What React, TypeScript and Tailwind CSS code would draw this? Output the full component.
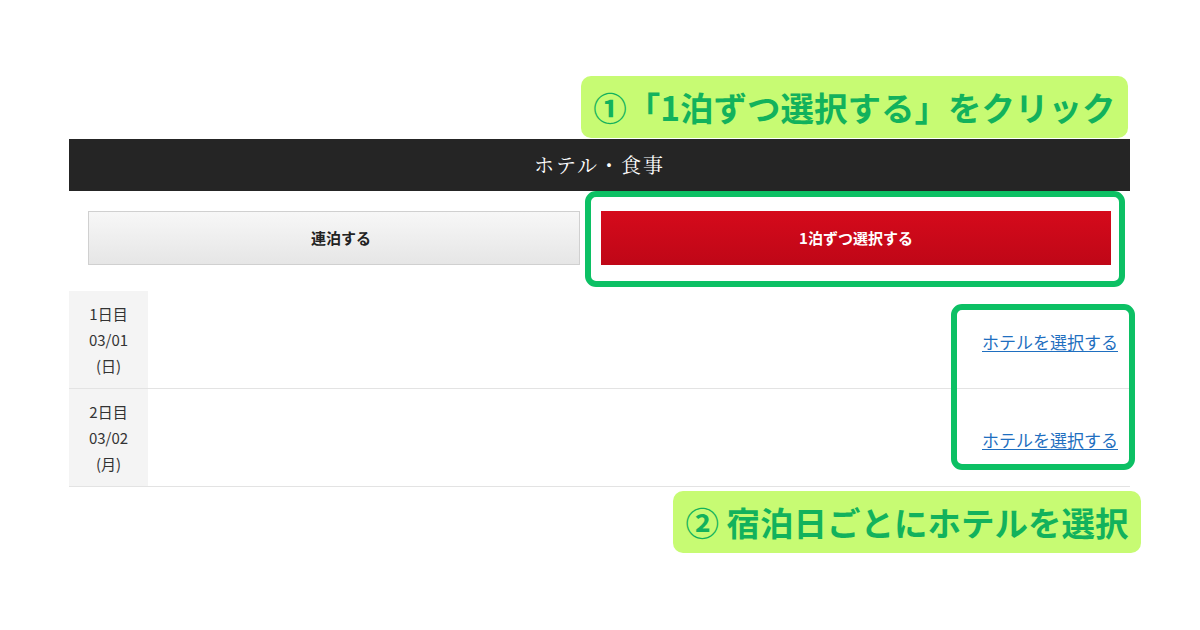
import React from "react";

const jp = { fontFamily: '"Noto Sans CJK JP", "Noto Sans", sans-serif' };

function Row({ day, date, dow }: { day: string; date: string; dow: string }) {
  return (
    <div className="flex h-[98px] border-b border-[#e3e3e3]">
      <div className="flex w-[79px] flex-col items-center justify-center bg-[#f4f4f4] text-[15px] leading-[26px] text-[#333]">
        <span>{day}</span>
        <span>{date}</span>
        <span>{dow}</span>
      </div>
      <div className="flex flex-1 items-center justify-end pr-[12px] pt-[4px]">
        <a className="text-[17px] text-[#1f6fc0] underline underline-offset-2" href="#">
          ホテルを選択する
        </a>
      </div>
    </div>
  );
}

export default function App() {
  return (
    <div className="relative h-[630px] w-[1200px] overflow-hidden bg-white" style={jp}>
      <div className="ml-[69px] w-[1061px] pt-[139px]">
        <div
          className="flex h-[52px] items-center justify-center bg-[#252525] text-[20px] tracking-[2px] text-white"
          style={{ fontFamily: '"Noto Serif CJK JP", "Liberation Serif", "Noto Sans CJK JP", serif' }}
        >
          ホテル・食事
        </div>
        <div className="flex gap-[21px] px-[19px] pt-[20px] pb-[26px]">
          <div className="flex h-[54px] w-[492px] items-center justify-center border border-[#d0d0d0] bg-gradient-to-b from-[#f7f7f7] to-[#e6e6e6] pl-[14px] text-[15px] font-bold text-[#222]">
            連泊する
          </div>
          <div className="flex h-[54px] flex-1 items-center justify-center bg-gradient-to-b from-[#d50a1b] to-[#bf0717] text-[15px] font-bold text-white">
            1泊ずつ選択する
          </div>
        </div>
        <div>
          <Row day="1日目" date="03/01" dow="(日)" />
          <Row day="2日目" date="03/02" dow="(月)" />
        </div>
      </div>

      {/* annotations */}
      <div className="absolute left-[581px] top-[76px] flex h-[62px] w-[547px] items-center justify-center rounded-[10px] bg-[#c7fb73] text-[33.5px] font-bold text-[#12b25c]">
        ①「1泊ずつ選択する」をクリック
      </div>
      <div className="absolute left-[585px] top-[191px] h-[96px] w-[540px] rounded-[11px] border-[6px] border-[#0cc064]" />
      <div className="absolute left-[951px] top-[304px] h-[166px] w-[184px] rounded-[11px] border-[6px] border-[#0cc064]" />
      <div className="absolute left-[673px] top-[491px] flex h-[62px] w-[468px] items-center justify-center rounded-[10px] bg-[#c7fb73] text-[33.5px] font-bold text-[#12b25c]">
        ② 宿泊日ごとにホテルを選択
      </div>
    </div>
  );
}
